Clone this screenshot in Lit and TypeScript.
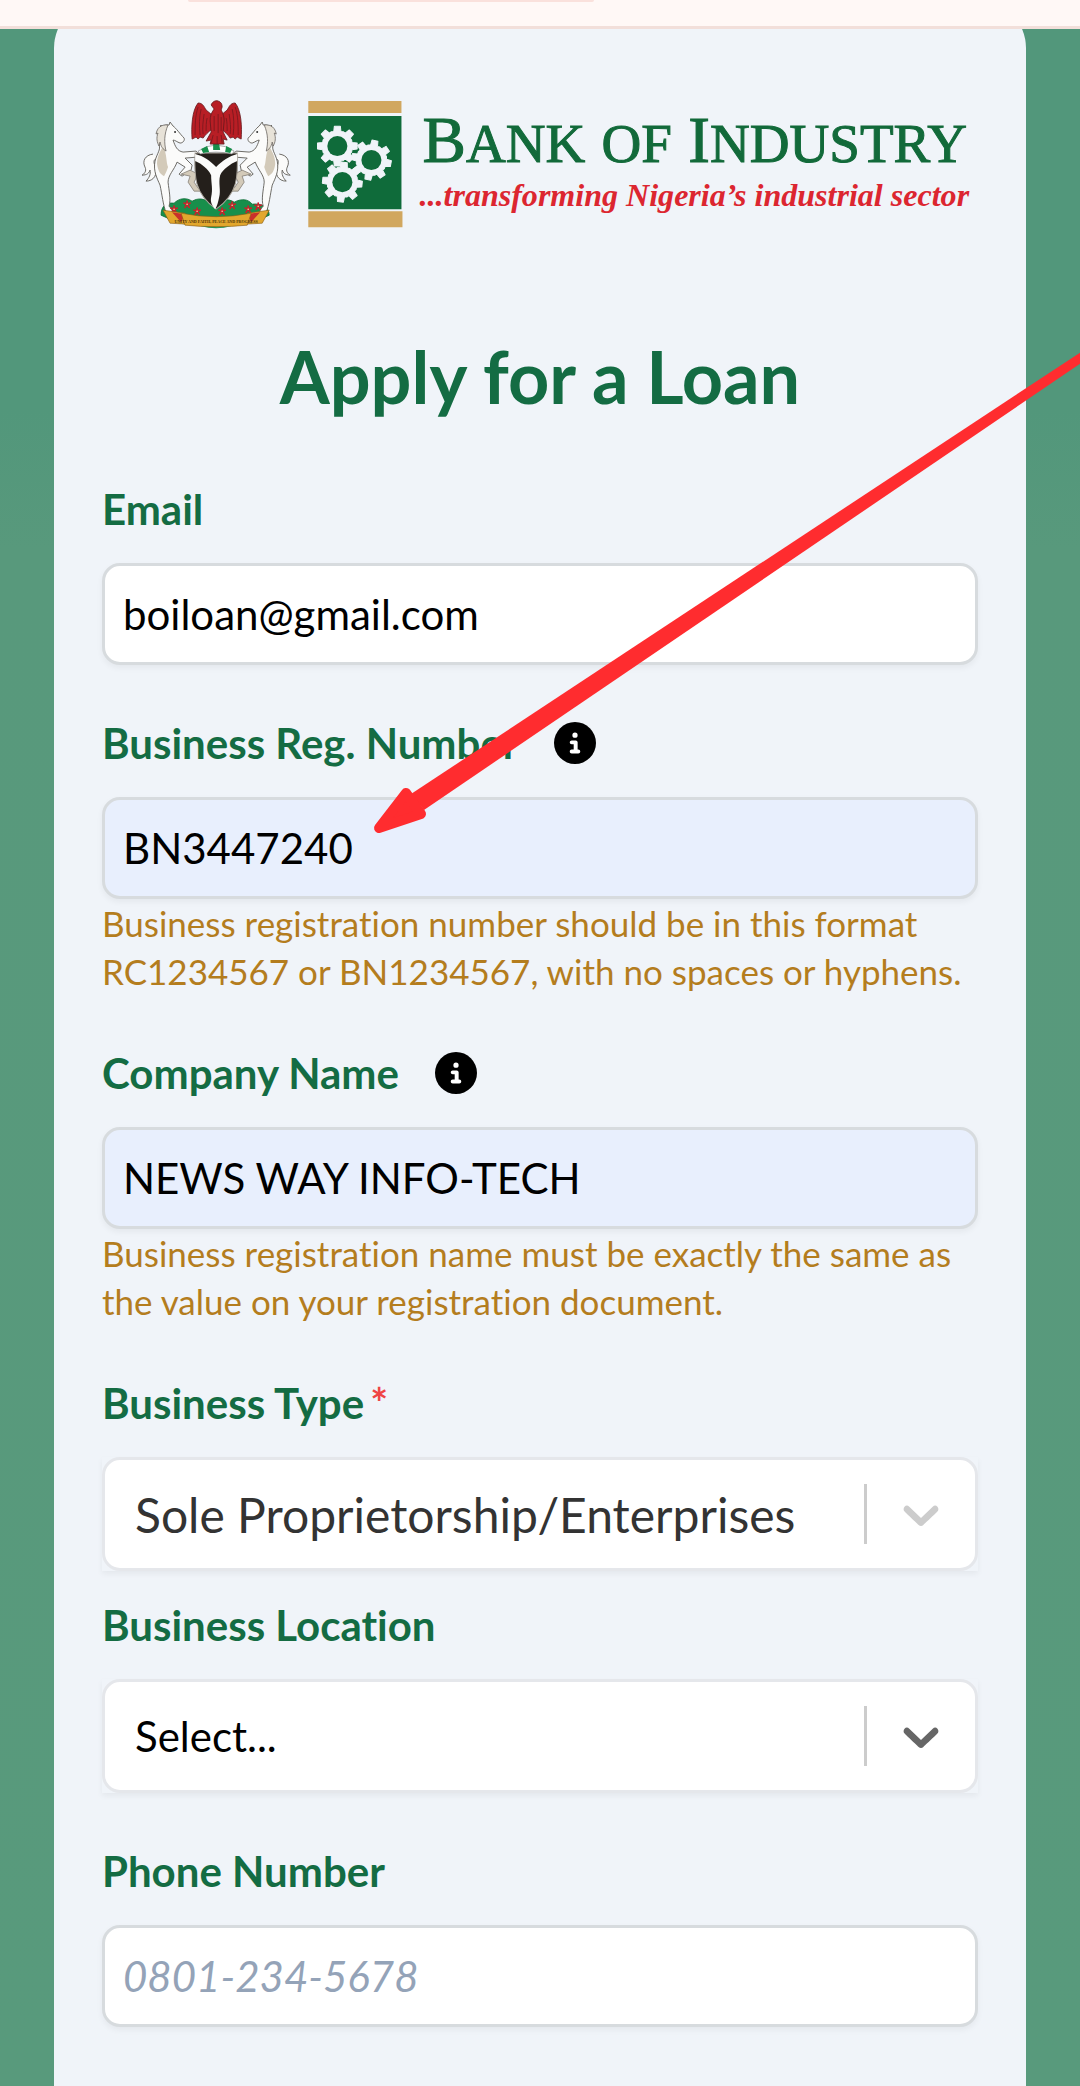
import { LitElement, html, css, svg, nothing } from "lit";
import { customElement } from "lit/decorators.js";

/** Outline of a cog with square teeth, centred on cx, cy. */
const cog = (cx: number, cy: number, turn: number) => {
  const teeth = 8;
  const pts: string[] = [];
  const at = (r: number, a: number) =>
    pts.push(`${(cx + r * Math.cos(a)).toFixed(1)},${(cy + r * Math.sin(a)).toFixed(1)}`);
  for (let i = 0; i < teeth; i++) {
    const a = turn + (i * 2 * Math.PI) / teeth;
    at(15, a - 0.24);
    at(20, a - 0.15);
    at(20, a + 0.15);
    at(15, a + 0.24);
    at(15.5, a + 0.39);
  }
  return svg`<polygon points=${pts.join(" ")} fill="#f0f4f9" stroke="#f0f4f9" stroke-width="1" stroke-linejoin="round"/>
    <circle cx=${cx} cy=${cy} r="10" fill="#0f6b3a"/>`;
};

const flower = (x: number, y: number) => svg`
  <g transform="translate(${x} ${y})" stroke="#c9202b" stroke-width="1.8" stroke-linecap="round">
    <path d="M0-3V0M0 0l3-1M0 0l2 3M0 0l-2 3M0 0l-3-1"/><circle r=".8" fill="#f3d9a0" stroke="none"/>
  </g>`;

const horse = svg`
  <path d="M12 53C4 54 1 60 4 66c2 4-1 7-3 8 5 0 7-2 8-5 1 4-1 8-4 11 8 0 12-7 9-15-2-5-1-8 3-7" fill="#fbfbfa" stroke="#5f5c57" stroke-width=".9"/>
  <path d="M20 27c3-4 7-3 8-3l1-3 3 4c3 2 7 8 11 12 1 2-1 5-4 5-3-1-5-3-7-3 2 6 4 11 10 12l13-1 3 3-2 3-12 1 7 7-1 5-9 6-3-2 6-7-8-5c-3 8-9 13-9 20 1 9 3 17 1 24 2 2 3 4 4 6h-7c-3-7-4-18-6-27-3-7-7-14-5-24 2-8 6-11 4-17-1-8 1-14 2-19z" fill="#fbfbfa" stroke="#5f5c57" stroke-width=".9" stroke-linejoin="round"/>
  <path d="M22 45c-3 6-6 10-6 18 1 7 3 10 7 12 2-3 3-6 4-9-2-4-1-13-5-21z" fill="#d3cab9"/>
  <path d="M40 73l9 2-2 6 6 9h14v-3h-10l-4-6 4-8-8-4z" fill="#d3cab9" stroke="#77716a" stroke-width=".7"/>
  <path d="M27 24c-7-1-11 3-12 9l2-1c-2 5-1 9 1 13l1-4c1 5 3 7 6 9-2-8-2-17 2-26z" fill="#e7e2d8" stroke="#6b6761" stroke-width=".8"/>
  <circle cx="34" cy="31" r="1" fill="#333"/>`;

const wing = svg`
  <path d="M57 2c5 0 6 4 8 7l6 5v14c-4 3-7 6-9 9l-3-1-2 2-2-2-4 2c-1-12 0-29 6-36z" fill="#b81e25" stroke="#64181b" stroke-width=".8" stroke-linejoin="round"/>
  <path d="M57 6c-3 9-3 18-3 28M60 8c-2 8-2 17-1 26M63 13c-1 7-2 14-1 20M66 17c-1 4-1 9-1 13" fill="none" stroke="#7c191e" stroke-width=".9"/>`;

const logo = html`
  <svg class="logo" viewBox="0 0 822 126" role="img" aria-label="Bank of Industry">
    <g>
      <path d="M20 114c0-9 5-13 13-12 5-5 12-6 18-2 6-3 11-4 22 4 6-6 14-7 20-3 8-4 14-3 18 2 8-1 17 2 17 11l-18 8-36 4-36-4z" fill="#178f4b" stroke="#0b6b35" stroke-width=".8"/>
      <g>${horse}</g>
      <g transform="matrix(-1 0 0 1 150 0)">${horse}</g>
      <path d="M54 52h42c1 23 1 40-21 56-22-16-22-33-21-56z" fill="#241f1b" stroke="#a9a49a" stroke-width="1"/>
      <path d="M54 53c9 2 15 7 21 13 6-6 13-11 21-13v7c-7 3-14 8-17 14-2 8 1 15-1 22-1 5-2 9-4 12-3-4-5-7-4-12 2-8 0-14 0-22-3-6-9-11-16-14z" fill="#fbfbfa"/>
      <path d="M57 50q18-12 36 0l-2 3q-16-4-32 0z" fill="#fff" stroke="#777" stroke-width=".6"/>
      <path d="M60 48l6-3 2 6-6 1zM72 43h6l1 6h-7zM85 45l6 3-2 4-5-1z" fill="#178f4b"/>
      <g>${wing}</g>
      <g transform="matrix(-1 0 0 1 151 0)">${wing}</g>
      <path d="M70 4c1-3 4-5 7-4 3 1 4 3 4 6l-1 3c2 3 3 7 3 11l-1 11 4 8-4-1 1 5H69l1-4-5 1 5-9-1-11c0-5 1-8 4-12z" fill="#b81e25" stroke="#64181b" stroke-width=".8" stroke-linejoin="round"/>
      <path d="M73 15v15M77 13v19M80 16v14M72 34l-2 8M76 35v8M80 34l1 8" fill="none" stroke="#7c191e" stroke-width=".9"/>
      ${flower(33, 108)}${flower(46, 103)}${flower(56, 110)}${flower(81, 110)}${flower(91, 104)}${flower(107, 108)}${flower(117, 105)}
      <path d="M22 109l22 3 2 11-17-1zM128 109l-22 3-2 11 17-1z" fill="#e2a72e" stroke="#8a5a13" stroke-width=".6"/>
      <path d="M31 111l13 2-4 8zM119 111l-13 2 4 8z" fill="#c9302b"/>
      <path d="M40 112q35 7 70 0l-4 12q-31 3-62 0z" fill="#e2a72e" stroke="#8a5a13" stroke-width=".6"/>
      <path d="M60 125q15 2 30 0-15 4-30 0z" fill="#178f4b"/>
      <text class="motto" x="75" y="122" text-anchor="middle">UNITY AND FAITH, PEACE AND PROGRESS</text>
    </g>
    <g>
      <path d="M167 0h93v12h-93zM167 110h94v16h-94z" fill="#d1a75f"/>
      <path d="M167 15h93v93h-93z" fill="#0f6b3a"/>
      ${cog(196, 45, Math.PI / 2)}${cog(230, 59, 0.18)}${cog(201, 81, 0.1)}
    </g>
    <text class="bank" x="281" y="61">B<tspan class="minor">ANK</tspan> <tspan class="minor">OF</tspan> I<tspan class="minor">NDUSTRY</tspan></text>
    <text class="tagline" x="278" y="105">...transforming Nigeria’s industrial sector</text>
  </svg>`;

const info = html`
  <svg viewBox="0 0 512 512" aria-hidden="true">
    <circle cx="256" cy="256" r="256"/>
    <path fill="#fff" d="M216 336h24V272H216c-13.3 0-24-10.7-24-24s10.7-24 24-24h48c13.3 0 24 10.7 24 24v88h8c13.3 0 24 10.7 24 24s-10.7 24-24 24H216c-13.3 0-24-10.7-24-24s10.7-24 24-24zm40-208a32 32 0 1 1 0 64 32 32 0 1 1 0-64z"/>
  </svg>`;

const chevron = html`
  <svg class="chevron" viewBox="0 0 20 20" aria-hidden="true">
    <path d="M4.516 7.548c0.436-0.446 1.043-0.481 1.576 0l3.908 3.747 3.908-3.747c0.533-0.481 1.141-0.446 1.574 0 0.436 0.445 0.408 1.197 0 1.615-0.406 0.418-4.695 4.502-4.695 4.502-0.217 0.223-0.502 0.335-0.787 0.335s-0.57-0.112-0.789-0.335c0 0-4.287-4.084-4.695-4.502s-0.436-1.17 0-1.615z"/>
  </svg>`;

@customElement("app-root")
export class AppRoot extends LitElement {
  static styles = css`
    :host { display: block; position: relative; overflow: hidden; font-family: Lato, sans-serif; font-variant-ligatures: none; color: #000; }
    * { box-sizing: border-box; }
    .toolbar { display: flex; height: 29px; padding: 0 188px; background: #fff8f6; border-bottom: 3px solid #f2dfda; }
    .address { width: 406px; height: 2px; background: #fae1dc; border-radius: 0 0 12px 12px; }
    .page { overflow: hidden; padding: 0 54px; background: linear-gradient(180deg, #52977b 0, #52977b 380px, #58997c 520px, #589a7c 100%); }
    .card { margin-top: -29px; padding: 101px 48px 60px; background: #f0f4f9; border-radius: 48px 48px 0 0; }
    .logo { display: block; width: 94%; margin-left: auto; margin-right: 14px; overflow: visible; }
    .motto { font: bold 4px "Liberation Serif", serif; fill: #4d3308; }
    .bank { font: 65px "Liberation Serif", serif; fill: #126a3a; stroke: #126a3a; stroke-width: 1; }
    .minor { font-size: 55px; }
    .tagline { font: italic bold 32px "Liberation Serif", serif; fill: #dc2630; }
    h1 { margin: 101px 0 55px; font-size: 72px; line-height: 96px; font-weight: 700; text-align: center; color: #146c43; }
    .form { display: flex; flex-direction: column; gap: 48px; }
    .pair { display: flex; flex-direction: column; gap: 24px; }
    .head { display: flex; align-items: center; gap: 36px; margin-bottom: 24px; }
    label { font-size: 42px; line-height: 60px; font-weight: 700; color: #146c43; }
    .star { margin-left: 6px; color: #ef4444; }
    .info { display: block; width: 42px; height: 42px; padding: 0; border: 0; background: none; }
    .info svg { display: block; width: 100%; }
    input { display: block; width: 100%; height: 102px; padding: 0 18px; border: 3px solid #d7dbde; border-radius: 18px; background: #fff; box-shadow: 0 3px 6px rgba(0, 0, 0, 0.05); font: 42px Lato, sans-serif; color: #000; }
    input.filled { background: #e8effd; }
    input::placeholder { font-style: italic; color: #94a3b8; opacity: 1; }
    .hint { margin: 0; font-size: 35px; line-height: 48px; color: #b47d1e; }
    .picker { display: grid; box-shadow: 0 3px 6px rgba(0, 0, 0, 0.05); }
    select { grid-area: 1 / 1; width: 100%; height: 114px; padding: 0 132px 0 30px; border: 3px solid #e5e7eb; border-radius: 18px; background: #fff; appearance: none; font: 42px Lato, sans-serif; color: #000; opacity: 1; }
    .chosen select { font-size: 48px; color: #333; }
    .indicators { grid-area: 1 / 1; justify-self: end; display: flex; align-items: center; padding: 0 27px 0 0; gap: 24px; pointer-events: none; z-index: 1; }
    .bar { width: 3px; height: 60px; background: #ccc; }
    .chevron { width: 60px; height: 60px; fill: #666; }
    .chosen .chevron { fill: #ccc; }
    .arrow { position: absolute; top: 340px; left: 0; width: 100%; fill: #ff2c2f; stroke: #ff2c2f; stroke-linejoin: round; pointer-events: none; }
  `;

  private head(id: string, label: string, opts: { info?: boolean; star?: boolean } = {}) {
    return html`<div class="head">
      <label for=${id}>${label}${opts.star ? html`<span class="star">*</span>` : nothing}</label>
      ${opts.info ? html`<button class="info" type="button" aria-label="About ${label}">${info}</button>` : nothing}
    </div>`;
  }

  private picker(id: string, label: string, value: string, chosen: boolean) {
    return html`<div>
      ${this.head(id, label, { star: chosen })}
      <div class="picker ${chosen ? "chosen" : ""}">
        <select id=${id}><option>${value}</option></select>
        <div class="indicators"><span class="bar"></span>${chevron}</div>
      </div>
    </div>`;
  }

  render() {
    return html`
      <div class="toolbar"><div class="address"></div></div>
      <main class="page">
        <div class="card">
          ${logo}
          <h1>Apply for a Loan</h1>
          <form class="form">
            <div>
              ${this.head("email", "Email")}
              <input id="email" type="email" value="boiloan@gmail.com" />
            </div>
            <div>
              ${this.head("reg", "Business Reg. Number", { info: true })}
              <input id="reg" class="filled" type="text" value="BN3447240" aria-describedby="reg-hint" />
              <p id="reg-hint" class="hint">Business registration number should be in this format RC1234567 or BN1234567, with no spaces or hyphens.</p>
            </div>
            <div>
              ${this.head("company", "Company Name", { info: true })}
              <input id="company" class="filled" type="text" value="NEWS WAY INFO-TECH" aria-describedby="company-hint" />
              <p id="company-hint" class="hint">Business registration name must be exactly the same as the value on your registration document.</p>
            </div>
            <div class="pair">
              ${this.picker("type", "Business Type", "Sole Proprietorship/Enterprises", true)}
              ${this.picker("location", "Business Location", "Select...", false)}
            </div>
            <div>
              ${this.head("phone", "Phone Number")}
              <input id="phone" type="tel" placeholder="0801-234-5678" />
            </div>
          </form>
        </div>
      </main>
      <svg class="arrow" viewBox="0 0 1080 500" aria-hidden="true">
        <path stroke="none" d="M1084 10L411 454l13 16L1084 21z"/>
        <path stroke-width="10" d="M379 488L406 453l15 21z"/>
      </svg>`;
  }
}
